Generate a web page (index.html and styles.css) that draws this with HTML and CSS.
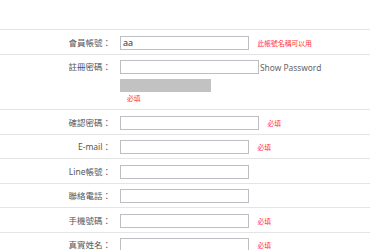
FILE: index.html
```html
<!DOCTYPE html>
<html lang="zh-Hant">
<head>
<meta charset="utf-8">
<title>會員註冊</title>
<link rel="stylesheet" href="styles.css">
</head>
<body>
<div class="form">
  <div class="row">
    <div class="label">會員帳號：</div>
    <div class="field"><input class="input" type="text" value="aa"><span class="msg">此帳號名稱可以用</span></div>
  </div>
  <div class="row row-pw">
    <div class="label">註冊密碼：</div>
    <div class="field-col">
      <div class="field"><input class="input wide" type="password"><span class="show">Show Password</span></div>
      <div class="strength"></div>
      <div class="note">必填</div>
    </div>
  </div>
  <div class="row">
    <div class="label">確認密碼：</div>
    <div class="field"><input class="input wide" type="password"><span class="msg">必填</span></div>
  </div>
  <div class="row">
    <div class="label">E-mail：</div>
    <div class="field"><input class="input" type="text"><span class="msg">必填</span></div>
  </div>
  <div class="row">
    <div class="label">Line帳號：</div>
    <div class="field"><input class="input" type="text"></div>
  </div>
  <div class="row">
    <div class="label">聯絡電話：</div>
    <div class="field"><input class="input" type="text"></div>
  </div>
  <div class="row">
    <div class="label">手機號碼：</div>
    <div class="field"><input class="input" type="text"><span class="msg">必填</span></div>
  </div>
  <div class="row">
    <div class="label">真實姓名：</div>
    <div class="field"><input class="input" type="text"><span class="msg">必填</span></div>
  </div>
</div>
</body>
</html>
```
FILE: styles.css
```css
html, body {
  margin: 0;
  padding: 0;
  background: #fff;
}
body {
  font-family: "Noto Sans", "Noto Sans CJK TC", sans-serif;
  color: #555;
  overflow: hidden;
}
.form {
  margin-top: 29px;
}
.row {
  display: grid;
  grid-template-columns: 111px 1fr;
  column-gap: 9px;
  border-top: 1px solid #e4e4e4;
  padding: 5.5px 0 4px;
}
.row-pw {
  padding-bottom: 5px;
}
.label {
  font-size: 8.5px;
  text-align: right;
  height: 14px;
  line-height: 14px;
  white-space: nowrap;
}
.field {
  display: flex;
  align-items: center;
  height: 14px;
}
.field-col {
  display: flex;
  flex-direction: column;
}
.input {
  box-sizing: border-box;
  width: 129px;
  height: 14px;
  margin: 0;
  padding: 0 2px;
  border: 1px solid #bdbdc4;
  border-radius: 0;
  font-family: "Noto Sans", sans-serif;
  font-size: 9px;
  color: #333;
  background: #fff;
  outline: none;
}
.input.wide {
  width: 139px;
}
.msg {
  margin-left: 8.5px;
  font-size: 6.8px;
  color: #f33;
  white-space: nowrap;
}
.show {
  font-size: 8.4px;
  color: #666;
  margin-left: 1px;
  white-space: nowrap;
}
.strength {
  width: 91px;
  height: 13px;
  margin-top: 5px;
  background: #c2c2c2;
}
.note {
  margin-top: 1px;
  margin-left: 7px;
  height: 11px;
  line-height: 11px;
  font-size: 6.8px;
  color: #f33;
}
```
